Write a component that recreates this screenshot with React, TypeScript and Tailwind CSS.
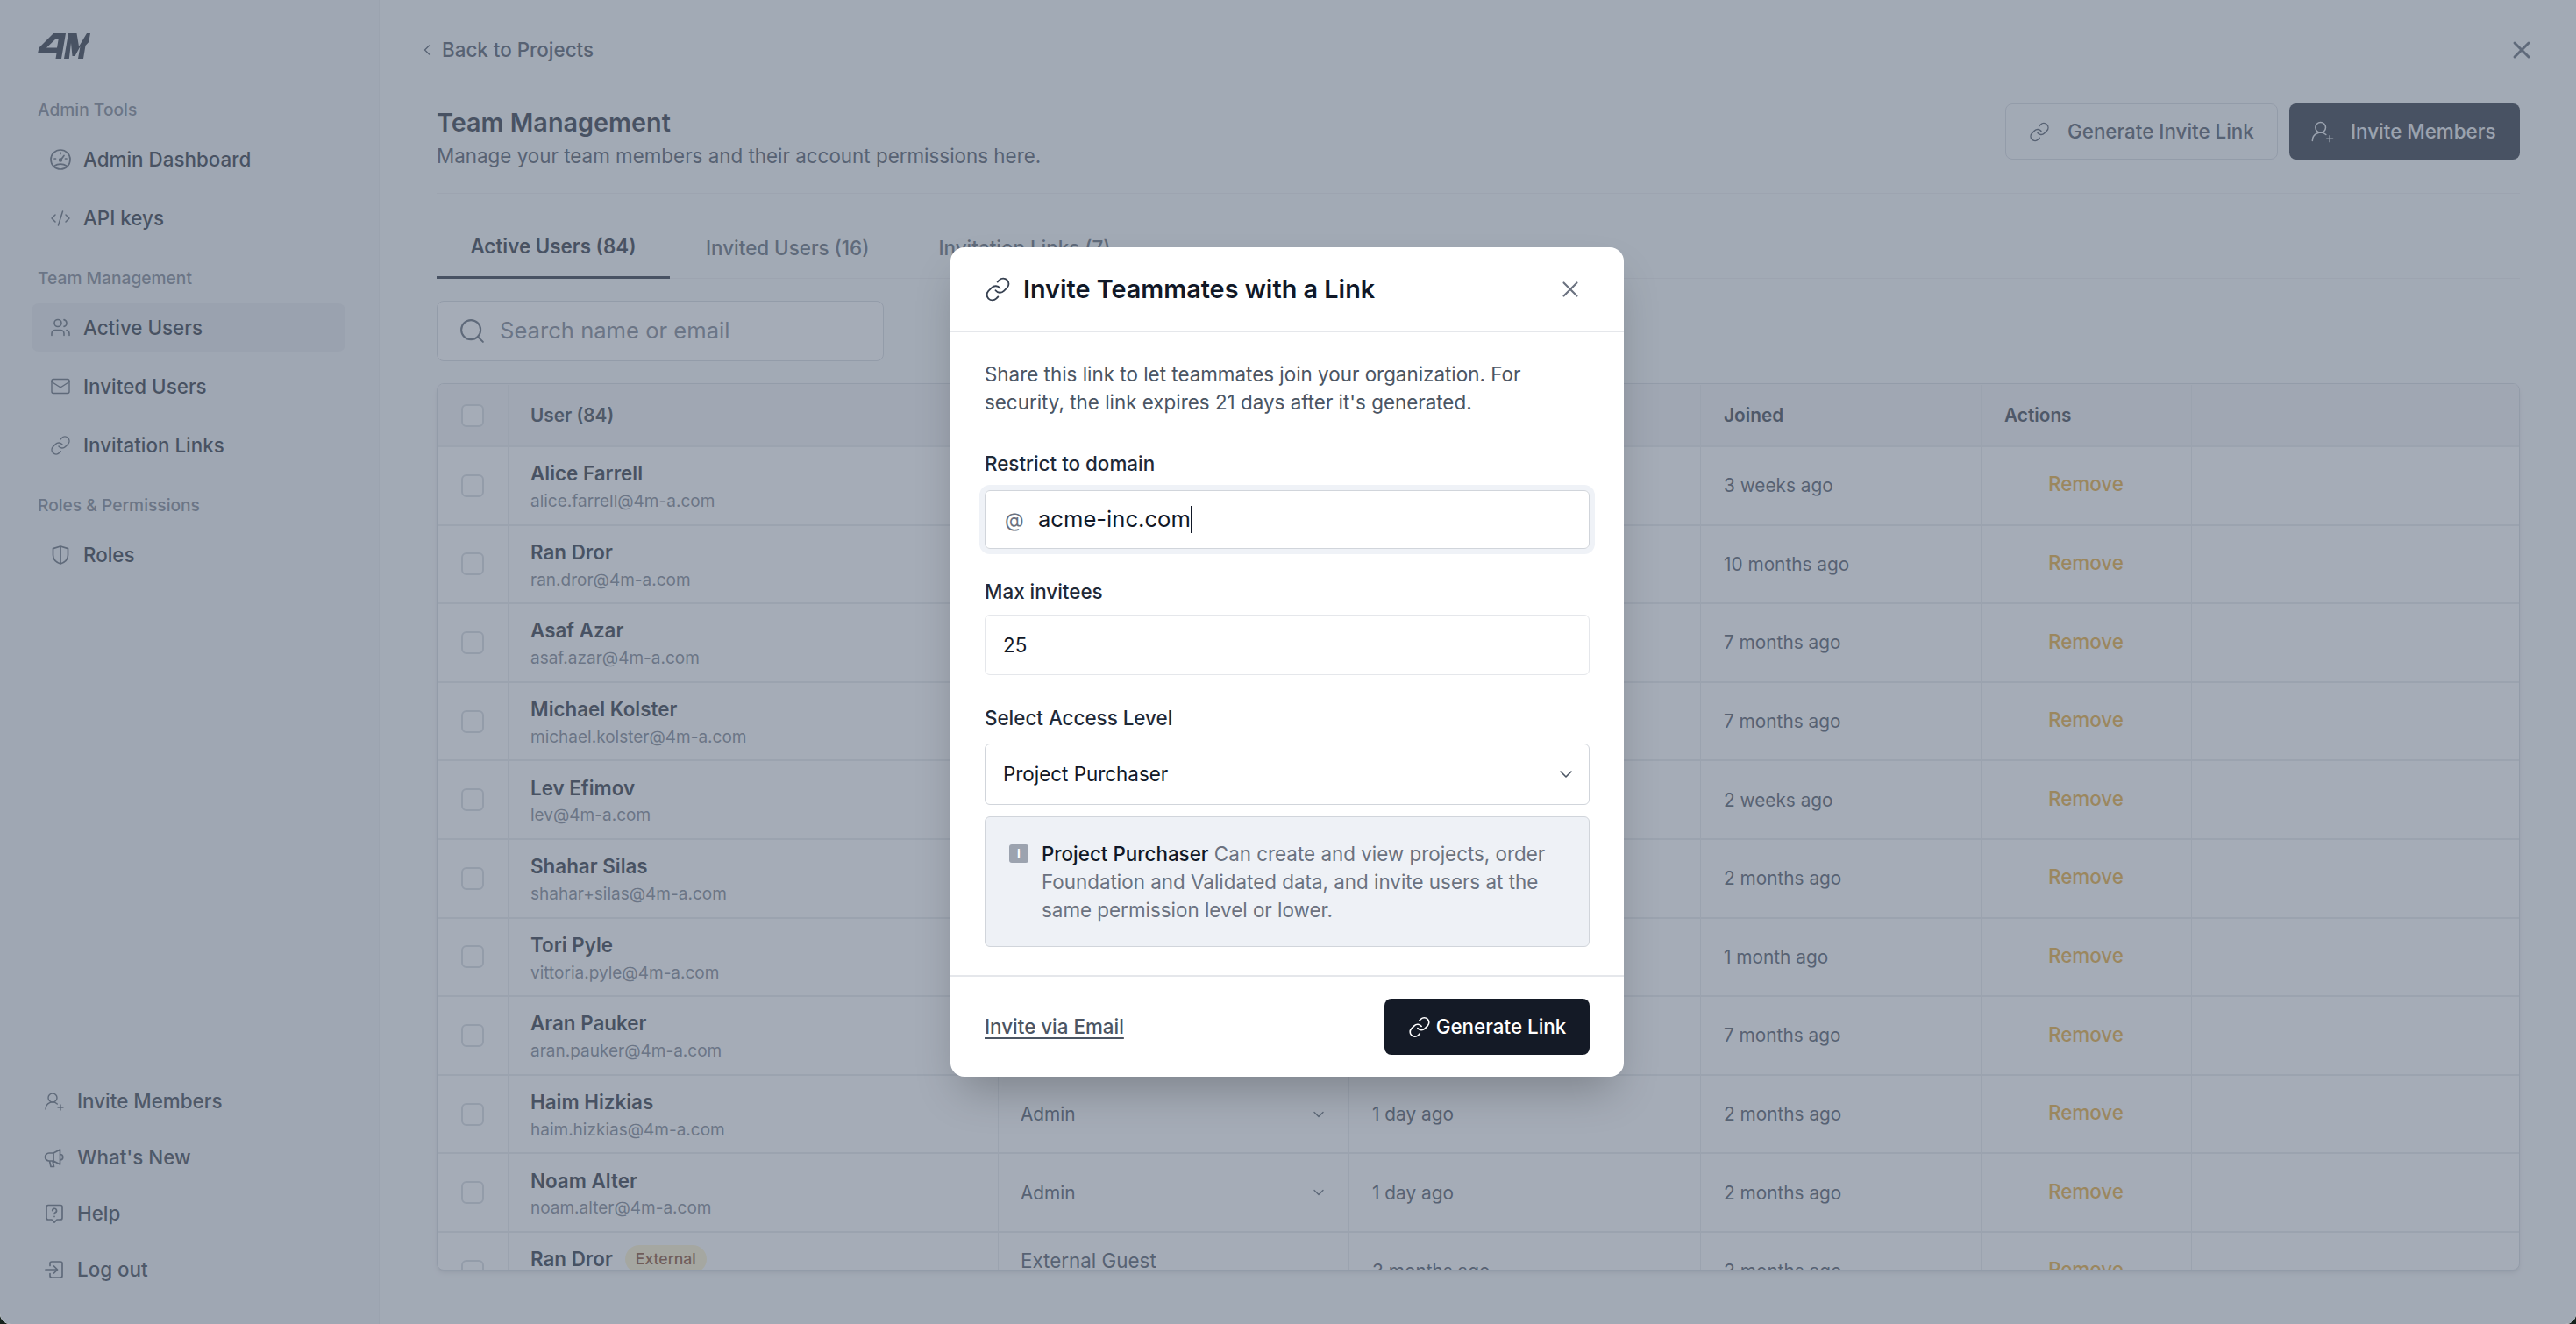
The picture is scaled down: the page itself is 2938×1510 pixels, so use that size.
import { ChevronDown, ChevronLeft, CodeXml, Link, Mail, Search, UserRoundPlus, Users, X } from 'lucide-react';
import type { ReactNode } from 'react';

const ic = { fill: 'none', stroke: 'currentColor', strokeWidth: 1.7, strokeLinecap: 'round', strokeLinejoin: 'round' } as const;

function Logo() {
  return (
    <svg width="60" height="29" viewBox="0 0 60 29" className="text-[#111827]" fill="currentColor">
      <path fillRule="evenodd" d="M18 0H32L27 29H20.500L21.500 23H0L1.500 16.500ZM21 6L10 16.500H22L23.800 6Z" />
      <path d="M30 29L35 0H44.500L47 15L56 0H60L58.200 10L54.500 14L52 29H46L48.500 15L42.500 26H39.500L38 11L35.800 29Z" />
    </svg>
  );
}

function GaugeIcon() {
  return (
    <svg width="24" height="24" viewBox="0 0 24 24" {...ic}>
      <circle cx="12" cy="12" r="11" />
      <path d="M5 19.200c2-1.300 4.400-2 7-2s5 .7 7 2M12 4v1.500M5 11h1.500M17.500 11H19M13 11.500l3-4" />
      <circle cx="12" cy="12.500" r="1.400" />
    </svg>
  );
}

function ShieldIcon() {
  return (
    <svg width="24" height="24" viewBox="0 0 24 24" {...ic}>
      <path d="M12 2l8.500 2.600V12c0 5-3.600 8.300-8.500 10-4.900-1.700-8.500-5-8.500-10V4.600L12 2zM12 2v20" />
    </svg>
  );
}

function MegaphoneIcon() {
  return (
    <svg width="24" height="24" viewBox="0 0 24 24" {...ic}>
      <path d="M11 7l7.500-4v17L11 16H6a4.500 4.500 0 0 1 0-9h5zM18.500 8.500a3.200 3.200 0 0 1 0 6.500M11 7v9M6.500 16l1.500 6.500h3.500L10 16" />
    </svg>
  );
}

function HelpIcon() {
  return (
    <svg width="24" height="24" viewBox="0 0 24 24" {...ic}>
      <path d="M5 2.500h14a2 2 0 0 1 2 2V17a2 2 0 0 1-2 2h-4l-3 3.200L9 19H5a2 2 0 0 1-2-2V4.500a2 2 0 0 1 2-2z" />
      <path d="M9.700 8.600a2.400 2.400 0 1 1 3.500 2.200c-.8.400-1.200.9-1.200 1.700M12 15.400v.1" />
    </svg>
  );
}

function LogoutIcon() {
  return (
    <svg width="24" height="24" viewBox="0 0 24 24" {...ic}>
      <path d="M7 7.500V5a2 2 0 0 1 2-2h10a2 2 0 0 1 2 2v14a2 2 0 0 1-2 2H9a2 2 0 0 1-2-2v-2.500M2 12h13.500M11.500 8l4 4-4 4" />
    </svg>
  );
}

function Slot({ children }: { children: ReactNode }) {
  return <span className="flex w-[24px] shrink-0 justify-center text-[#4b5563]">{children}</span>;
}

function NavLabel({ children }: { children: ReactNode }) {
  return <div className="mb-[15px] h-[28px] pl-[7px] text-[19.2px] leading-[28px] font-medium text-[#6b7280]">{children}</div>;
}

function NavItem({ icon, label, active }: { icon: ReactNode; label: string; active?: boolean }) {
  return (
    <div className={`flex h-[55px] items-center gap-[14px] rounded-[8px] pl-[21px] text-[22.4px] font-medium text-[#111827] ${active ? 'bg-[#e3e6ea]' : ''}`}>
      <Slot>{icon}</Slot>
      {label}
    </div>
  );
}

function FootItem({ icon, label }: { icon: ReactNode; label: string }) {
  return (
    <div className="flex h-[40px] items-center gap-[14px] pl-[14px] text-[22.4px] font-medium text-[#1f2937]">
      <Slot>{icon}</Slot>
      {label}
    </div>
  );
}

const ROWS = [
  { name: 'Alice Farrell', email: 'alice.farrell@4m-a.com', role: 'Admin', last: '1 day ago', joined: '3 weeks ago' },
  { name: 'Ran Dror', email: 'ran.dror@4m-a.com', role: 'Admin', last: '1 day ago', joined: '10 months ago' },
  { name: 'Asaf Azar', email: 'asaf.azar@4m-a.com', role: 'Admin', last: '1 day ago', joined: '7 months ago' },
  { name: 'Michael Kolster', email: 'michael.kolster@4m-a.com', role: 'Admin', last: '1 day ago', joined: '7 months ago' },
  { name: 'Lev Efimov', email: 'lev@4m-a.com', role: 'Admin', last: '1 day ago', joined: '2 weeks ago' },
  { name: 'Shahar Silas', email: 'shahar+silas@4m-a.com', role: 'Admin', last: '1 day ago', joined: '2 months ago' },
  { name: 'Tori Pyle', email: 'vittoria.pyle@4m-a.com', role: 'Admin', last: '1 day ago', joined: '1 month ago' },
  { name: 'Aran Pauker', email: 'aran.pauker@4m-a.com', role: 'Admin', last: '1 day ago', joined: '7 months ago' },
  { name: 'Haim Hizkias', email: 'haim.hizkias@4m-a.com', role: 'Admin', last: '1 day ago', joined: '2 months ago' },
  { name: 'Noam Alter', email: 'noam.alter@4m-a.com', role: 'Admin', last: '1 day ago', joined: '2 months ago' },
];

const cols = 'grid grid-cols-[80px_559px_400px_401px_320px_240px_1fr]';

function Checkbox() {
  return <div className="h-[26px] w-[26px] rounded-[6px] border-2 border-[#d1d5db] bg-white" />;
}

function Row({ name, email, role, last, joined, external }: { name: string; email: string; role: string; last: string; joined: string; external?: boolean }) {
  return (
    <div className={`${cols} h-[89.6px] shrink-0 border-b-2 border-[#e5e7eb] text-[20.8px] text-[#374151]`}>
      <div className="flex items-center justify-center"><Checkbox /></div>
      <div className="border-l border-[#e5e7eb] pl-[25px] pt-[12px]">
        <div className="flex h-[36px] items-center gap-[14px] text-[22.4px] font-semibold text-[#111827]">
          {name}
          {external && <span className="rounded-full bg-[#fef3c7] px-[12px] text-[17.6px] leading-[32px] font-medium text-[#78350f]">External</span>}
        </div>
        <div className="text-[19px] leading-[28px] text-[#6b7280]">{email}</div>
      </div>
      <div className={`flex justify-between border-l border-[#e5e7eb] pl-[25px] pr-[24px] ${external ? 'items-start pt-[15px] text-[22.4px]' : 'items-center'}`}>
        {role}
        {!external && <ChevronDown size={20} strokeWidth={1.7} className="text-[#4b5563]" />}
      </div>
      <div className="flex items-center border-l border-[#e5e7eb] pl-[26px]">{last}</div>
      <div className="flex items-center border-l border-[#e5e7eb] pl-[26px]">{joined}</div>
      <div className="flex items-center border-l border-[#e5e7eb] pb-[3px] pl-[76px] text-[22.4px] font-medium text-[#e4a11b]">Remove</div>
      <div className="border-l border-[#e5e7eb]" />
    </div>
  );
}

function Field({ label, children }: { label: string; children: ReactNode }) {
  return (
    <div>
      <div className="text-[22.4px] leading-[32px] font-medium text-[#1f2937]">{label}</div>
      {children}
    </div>
  );
}

export default function App() {
  return (
    <div className="h-screen w-full overflow-hidden bg-[#17231d] [font-family:Inter,sans-serif]">
      <div className="relative flex h-full overflow-hidden rounded-b-[12px] bg-white">
        {/* Sidebar */}
        <aside className="flex w-[433px] shrink-0 flex-col border-r border-[#e5e7eb] bg-[#f0f2f4] pb-[42px] pl-[36px] pr-[38px] pt-[38px]">
          <div className="pl-[7px]"><Logo /></div>
          <div className="mt-[44px]">
            <NavLabel>Admin Tools</NavLabel>
            <div className="flex flex-col gap-[12px]">
              <NavItem icon={<GaugeIcon />} label="Admin Dashboard" />
              <NavItem icon={<CodeXml size={28} strokeWidth={1.5} />} label="API keys" />
            </div>
          </div>
          <div className="mt-[27px]">
            <NavLabel>Team Management</NavLabel>
            <div className="flex flex-col gap-[12px]">
              <NavItem active icon={<Users size={27} strokeWidth={1.6} />} label="Active Users" />
              <NavItem icon={<Mail size={29} strokeWidth={1.4} />} label="Invited Users" />
              <NavItem icon={<Link size={28} strokeWidth={1.5} />} label="Invitation Links" />
            </div>
          </div>
          <div className="mt-[27px]">
            <NavLabel>Roles &amp; Permissions</NavLabel>
            <NavItem icon={<ShieldIcon />} label="Roles" />
          </div>
          <div className="mt-auto flex flex-col gap-[24px]">
            <FootItem icon={<UserRoundPlus size={30} strokeWidth={1.4} />} label="Invite Members" />
            <FootItem icon={<MegaphoneIcon />} label="What's New" />
            <FootItem icon={<HelpIcon />} label="Help" />
            <FootItem icon={<LogoutIcon />} label="Log out" />
          </div>
        </aside>

        {/* Main */}
        <main className="flex min-w-0 flex-1 flex-col bg-[#f8f9fa]">
          <div className="flex h-[118px] items-start justify-between pl-[44px] pr-[46px] pt-[41px]">
            <div className="flex h-[32px] items-center gap-[7px] text-[22.4px] font-medium text-[#374151]">
              <span className="flex w-[20px] justify-center"><ChevronLeft size={32} strokeWidth={1.5} /></span>
              Back to Projects
            </div>
            <X size={32} strokeWidth={2.2} className="text-[#4b5563]" />
          </div>
          <div className="flex min-h-0 flex-1 flex-col pl-[65px] pr-[64px]">
            <div className="flex h-[103px] shrink-0 items-start justify-between border-b border-[#e9ebee]">
              <div className="pt-[4px]">
                <h1 className="text-[28.8px] leading-[36px] font-semibold text-[#111827]">Team Management</h1>
                <p className="mt-[4px] text-[22.4px] leading-[32px] text-[#374151]">Manage your team members and their account permissions here.</p>
              </div>
              <div className="flex gap-[13px] text-[22.4px] font-medium">
                <button className="flex h-[64px] w-[311px] items-center gap-[20px] rounded-[8px] border border-[#d1d5db] pl-[26px] text-[#374151]">
                  <span className="flex w-[24px] justify-center"><Link size={29} strokeWidth={1.5} /></span>
                  Generate Invite Link
                </button>
                <button className="flex h-[64px] w-[263px] items-center gap-[18px] rounded-[8px] bg-[#111827] pl-[24px] text-[#e5e7eb]">
                  <span className="flex w-[28px] justify-center"><UserRoundPlus size={34} strokeWidth={1.3} /></span>
                  Invite Members
                </button>
              </div>
            </div>

            <div className="flex h-[97px] shrink-0 items-end gap-[3px] border-b border-[#e9ebee] text-[22.4px] leading-[32px] font-medium text-[#4b5563]">
              <div className="-mb-px w-[266px] border-b-[3px] border-[#111827] pb-[18px] text-center font-semibold text-[#111827]">Active Users (84)</div>
              <div className="pb-[18px] pl-[38px] pr-[38px]">Invited Users (16)</div>
              <div className="pb-[18px] pl-[38px] pr-[38px]">Invitation Links (7)</div>
            </div>

            <div className="mt-[25px] flex h-[69px] w-[510px] shrink-0 items-center gap-[15px] rounded-[8px] border border-[#d1d5db] bg-white pl-[23px]">
              <Search size={33} strokeWidth={1.5} className="text-[#4b5563]" />
              <input readOnly placeholder="Search name or email" className="min-w-0 flex-1 bg-transparent text-[25.6px] outline-none placeholder:text-[#6b7280]" />
            </div>

            <div className="mb-[61px] mt-[25px] flex min-h-0 flex-1 flex-col overflow-hidden rounded-[8px] border border-[#d1d5db] bg-white shadow-md">
              <div className={`${cols} h-[72px] shrink-0 border-b-2 border-[#e5e7eb] bg-[#f1f2f4] pt-[1px] text-[20.8px] font-semibold text-[#1f2937]`}>
                <div className="flex items-center justify-center"><Checkbox /></div>
                <div className="flex items-center border-l border-[#e5e7eb] pl-[25px]">User (84)</div>
                <div className="flex items-center border-l border-[#e5e7eb] pl-[25px]">Role</div>
                <div className="flex items-center border-l border-[#e5e7eb] pl-[26px]">Last Active</div>
                <div className="flex items-center border-l border-[#e5e7eb] pl-[26px]">Joined</div>
                <div className="flex items-center border-l border-[#e5e7eb] pl-[26px]">Actions</div>
                <div className="border-l border-[#e5e7eb]" />
              </div>
              {ROWS.map(r => <Row key={r.email} {...r} />)}
              <Row external name="Ran Dror" email="ran.dror@external.com" role="External Guest" last="3 months ago" joined="3 months ago" />
            </div>
          </div>
        </main>

        {/* Overlay */}
        <div className="absolute inset-0 flex items-center justify-center bg-[#6c788a]/[0.613]">
          <div className="mr-[2px] flex h-[946px] w-[768px] flex-col overflow-hidden rounded-[16px] bg-white shadow-[0_25px_50px_-12px_rgba(0,0,0,0.25)]">
            <div className="flex h-[97px] shrink-0 items-center justify-between border-b-2 border-[#e5e7eb] pl-[39px] pr-[46px]">
              <div className="flex items-center gap-[14px] text-[28.8px] font-semibold text-[#111827]">
                <span className="flex w-[30px] justify-center"><Link size={36} strokeWidth={1.5} className="text-[#374151]" /></span>
                Invite Teammates with a Link
              </div>
              <X size={30} strokeWidth={1.7} className="text-[#6b7280]" />
            </div>

            <div className="flex-1 px-[39px] pt-[32px]">
              <p className="text-[22.4px] leading-[32px] text-[#4b5563]">Share this link to let teammates join your organization. For security, the link expires 21 days after it's generated.</p>

              <div className="mt-[38px]">
                <Field label="Restrict to domain">
                  <div className="mt-[14px] flex h-[67px] items-center rounded-[6px] border border-[#d1d5db] pl-[22px] shadow-[0_0_0_6px_#eff2f7]">
                    <span className="w-[38px] text-[22.4px] text-[#6b7280]">@</span>
                    <span className="text-[25.6px] text-[#111827]">acme-inc.com</span>
                    <span className="h-[31px] w-[2px] bg-[#111827]" />
                  </div>
                </Field>
              </div>
              <div className="mt-[33px]">
                <Field label="Max invitees">
                  <div className="mt-[10px] flex h-[69px] items-center rounded-[6px] border border-[#e5e7eb] pl-[20px] text-[22.4px] text-[#111827]">25</div>
                </Field>
              </div>
              <div className="mt-[33px]">
                <Field label="Select Access Level">
                  <div className="mt-[13px] flex h-[70px] items-center justify-between rounded-[6px] border border-[#d1d5db] pl-[20px] pr-[14px] text-[22.4px] text-[#111827]">
                    Project Purchaser
                    <ChevronDown size={24} strokeWidth={1.6} className="text-[#4b5563]" />
                  </div>
                </Field>
              </div>
              <div className="mt-[13px] flex h-[149px] gap-[15px] rounded-[6px] border border-[#d1d5db] bg-[#eef1f6] pl-[27px] pr-[24px] pt-[26px]">
                <div className="mt-[5px] flex h-[21px] w-[22px] shrink-0 items-center justify-center rounded-[3px] bg-[#9ca3af] text-[14px] font-bold text-white">i</div>
                <p className="text-[22.4px] leading-[32px] text-[#6b7280]">
                  <span className="font-medium text-[#111827]">Project Purchaser</span> Can create and view projects, order Foundation and Validated data, and invite users at the same permission level or lower.
                </p>
              </div>
            </div>

            <div className="flex h-[116px] shrink-0 items-center justify-between border-t-2 border-[#e5e7eb] px-[39px]">
              <span className="text-[22.4px] font-medium text-[#4b5563] underline underline-offset-4">Invite via Email</span>
              <button className="flex h-[64px] w-[234px] items-center justify-center gap-[6px] rounded-[8px] bg-[#141a26] text-[22.4px] font-medium text-white">
                <span className="flex w-[26px] justify-center"><Link size={29} strokeWidth={1.5} /></span>
                Generate Link
              </button>
            </div>
          </div>
        </div>
      </div>
    </div>
  );
}
